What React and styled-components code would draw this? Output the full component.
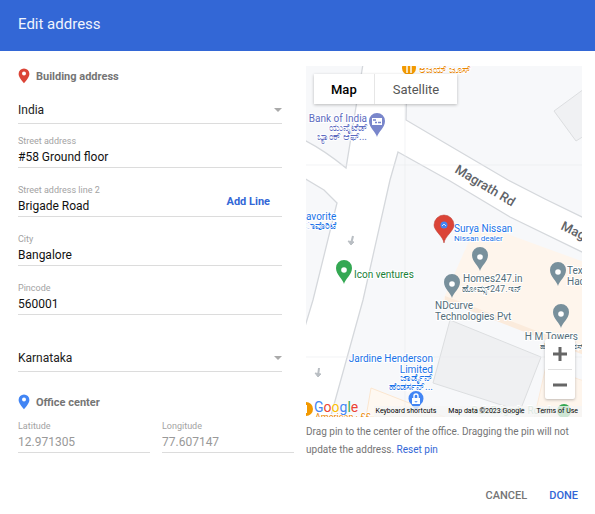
import React, { useState } from "react";
import styled, { createGlobalStyle } from "styled-components";

const PIN_PATH =
  "M0 0C-1-5-8-9-8-16A8 8 0 0 1 8-16C8-9 1-5 0 0Z";

const ADDRESS_FIELDS = [
  { name: "street", label: "Street address" },
  { name: "street2", label: "Street address line 2", action: "Add Line" },
  { name: "city", label: "City" },
  { name: "pincode", label: "Pincode" },
];

const PINS = [
  { x: 38, y: 218, color: "#34a853" },
  { x: 174, y: 205, color: "#78909c" },
  { x: 146, y: 232, color: "#78909c" },
  { x: 252, y: 220, color: "#78909c" },
  { x: 255, y: 262, color: "#78909c" },
];

const LABELS = [
  { x: 113, y: 7, text: "ಅಜಯ್ ಜೂಸ್", color: "#ea8600" },
  { x: 61, y: 56, text: "Bank of India", color: "#5c6bc0", anchor: "end" },
  { x: 61, y: 65, text: "ಯುನೈಟೆಡ್", color: "#5c6bc0", anchor: "end" },
  { x: 61, y: 74, text: "ಬ್ಯಾಂಕ್ ಆಫ್...", color: "#5c6bc0", anchor: "end" },
  { x: 0, y: 154, text: "avorite", color: "#1a73e8" },
  { x: -1, y: 163, text: "ಾವೊರಿಟೆ", color: "#1a73e8", size: 9 },
  { x: 48, y: 212, text: "Icon ventures", color: "#188038" },
  { x: 148, y: 166, text: "Surya Nissan", color: "#1a73e8" },
  { x: 148, y: 175, text: "Nissan dealer", color: "#1a73e8", size: 8 },
  { x: 157, y: 216, text: "Homes247.in", color: "#546e7a" },
  { x: 156, y: 226, text: "ಹೋಮ್ಸ್247.ಇನ್", color: "#546e7a", size: 9 },
  { x: 129, y: 243, text: "NDcurve", color: "#546e7a" },
  { x: 129, y: 254, text: "Technologies Pvt", color: "#546e7a" },
  { x: 261, y: 208, text: "Texas", color: "#546e7a" },
  { x: 261, y: 219, text: "Hacks", color: "#546e7a" },
  { x: 272, y: 274, text: "H M Towers", color: "#546e7a", anchor: "end" },
  { x: 234, y: 283, text: "ಹೆಚ್ ಎಂ ಟವರ್ಸ್", color: "#546e7a", size: 8 },
  { x: 127, y: 296, text: "Jardine Henderson", color: "#1a73e8", anchor: "end" },
  { x: 127, y: 307, text: "Limited", color: "#1a73e8", anchor: "end" },
  { x: 127, y: 315, text: "ಜಾರ್ಡೈನ್", color: "#1a73e8", anchor: "end" },
  { x: 127, y: 324, text: "ಹೆಂಡರ್ಸನ್...", color: "#1a73e8", anchor: "end" },
  { x: 9, y: 354, text: "American · ££", color: "#ea8600", size: 9 },
  { x: 165, y: 348, text: "Oak Brigade Road", color: "#81b894" },
];

const PinIcon = ({ color }) => (
  <svg width="12" height="16" viewBox="0 0 12 16" aria-hidden="true">
    <path
      d="M6 0.5A5.4 5.4 0 0 0 .6 5.9C.6 9.6 6 15.2 6 15.2S11.4 9.6 11.4 5.9A5.4 5.4 0 0 0 6 .5Z"
      fill={color}
    />
    <circle cx="6" cy="5.6" r="2" fill="#fff" />
  </svg>
);

const SelectField = ({ label, value, options, onChange }) => (
  <SelectWrapStyling>
    <SelectStyling aria-label={label} value={value} onChange={onChange}>
      {options.map((option) => (
        <option key={option}>{option}</option>
      ))}
    </SelectStyling>
    <svg width="8" height="4" viewBox="0 0 8 4" aria-hidden="true">
      <path d="M0 0H8L4 4Z" fill="#aaa" />
    </svg>
  </SelectWrapStyling>
);

const TextField = ({ id, label, action, ...rest }) => (
  <FieldStyling>
    <LabelStyling htmlFor={id}>{label}</LabelStyling>
    <InputRowStyling>
      <InputStyling id={id} {...rest} />
      {action && <AddLineStyling type="button">{action}</AddLineStyling>}
    </InputRowStyling>
  </FieldStyling>
);

const MapDrawing = () => (
  <MapSvgStyling viewBox="0 0 276 351" preserveAspectRatio="xMidYMid slice">
    <rect width="276" height="351" fill="#fff" />
    <g fill="#f7f8fa" stroke="#d5d8dc" strokeWidth="1.3">
      <path d="M57-2L40 102Q18 84-2 74V-2Z" />
      <path d="M-2 112L18 124L31 137L7 234L-2 264Z" />
      <path d="M101-2L100 54L139 77L202 114L239 133L278 152V-2Z" />
      <path d="M92 86L144 115L204 151L278 187V353H24L57 234L84 114Z" />
    </g>
    <path d="M248 45L278 23V70L270 75Z" fill="#f0f1f3" stroke="#dcdee0" />
    <path d="M171 157L278 196V288L137 234L151 202Z" fill="#fef5ec" />
    <path d="M139 230L278 283V289L139 235Z" fill="#fbebdc" />
    <path d="M65 322L139 351H60Z" fill="#fef8f1" stroke="#fbe6cf" />
    <path d="M240 300C252 304 262 310 278 315V353H228Z" fill="#fef5ec" stroke="#fbebdc" />
    <path d="M144 254L235 291L214 345L127 317Z" fill="#eff0f2" stroke="#dcdee0" />
    <path d="M99 0V351M0 99H276M0 291H276" stroke="#e9ebee" strokeWidth="0.6" />
    <g fill="none" stroke="#b9bec3" strokeWidth="1">
      <path d="M47 170L45 178" strokeWidth="2" />
      <path d="M42 175L45 179L48 176Z" fill="#b9bec3" />
      <path d="M13 302L12 310" strokeWidth="2" />
      <path d="M9 307L12 311L15 308Z" fill="#b9bec3" />
    </g>
    <RoadNameStyling x="0" y="0" transform="translate(148 106) rotate(31)">
      Magrath Rd
    </RoadNameStyling>
    <RoadNameStyling x="0" y="0" transform="translate(254 163) rotate(26)">
      Magrath Rd
    </RoadNameStyling>
    {PINS.map(({ x, y, color }) => (
      <g key={`${x}-${y}`} transform={`translate(${x} ${y})`}>
        <path d={PIN_PATH} fill={color} />
        <circle cy="-14" r="2.8" fill="#fff" />
      </g>
    ))}
    <g transform="translate(71 71)">
      <path d={PIN_PATH} fill="#7986cb" />
      <path d="M-5-19H5V-12H-5Z" fill="#fff" />
      <path d="M-4-17H-1M-2-14.500H0M1-14.500H4" stroke="#7986cb" strokeWidth="1.4" />
    </g>
    <circle cx="103" cy="2" r="7" fill="#f29900" />
    <path d="M99-1H105M101-1V7M105 0V7" stroke="#fff" strokeWidth="1.4" />
    <circle cx="0" cy="343" r="7" fill="#f29900" />
    <path d="M0 339V347" stroke="#fff" strokeWidth="2" />
    <circle cx="258" cy="345" r="7" fill="#34a853" />
    <g transform="translate(110 333)">
      <path d="M0 12L-5 5A7.5 7.5 0 1 1 5 5Z" fill="#4285f4" />
      <path d="M-4-1H4V5H-4Z" fill="#fff" />
      <path d="M-2-1V-3A2 2 0 0 1 2-3V-1" fill="none" stroke="#fff" strokeWidth="1.4" />
      <path d="M-1 2A1 1 0 0 0 1 2" stroke="#4285f4" fill="none" />
    </g>
    {LABELS.map(({ x, y, text, color, anchor, size = 10 }) => (
      <PlaceNameStyling key={text} x={x} y={y} fill={color} textAnchor={anchor} $size={size}>
        {text}
      </PlaceNameStyling>
    ))}
    <path
      d="M138 177C137 170 128 165 128 159A10 10 0 0 1 148 159C148 165 139 170 138 177Z"
      fill="#db4437"
      stroke="#b93b30"
      strokeWidth="0.5"
    />
    <circle cx="138" cy="159" r="3.500" fill="#4285f4" />
    <path d="M136 160L138 158L140 160" stroke="#cfe0ff" fill="none" />
  </MapSvgStyling>
);

const GoogleLogo = () => (
  <LogoStyling href="#google" aria-label="Google">
    {["#4285f4", "#ea4335", "#fbbc04", "#4285f4", "#34a853", "#ea4335"].map(
      (color, index) => (
        <LogoLetterStyling key={index} $color={color}>
          {"Google"[index]}
        </LogoLetterStyling>
      )
    )}
  </LogoStyling>
);

const OfficeMap = () => {
  const [view, setView] = useState("Map");
  return (
    <MapStyling>
      <MapDrawing />
      <ViewSwitchStyling>
        {["Map", "Satellite"].map((name) => (
          <ViewButtonStyling
            key={name}
            type="button"
            $active={view === name}
            onClick={() => setView(name)}
          >
            {name}
          </ViewButtonStyling>
        ))}
      </ViewSwitchStyling>
      <ZoomStyling>
        <ZoomButtonStyling type="button" aria-label="Zoom in">
          <svg width="14" height="14" viewBox="0 0 14 14">
            <path d="M7 0V14M0 7H14" stroke="#666" strokeWidth="3" />
          </svg>
        </ZoomButtonStyling>
        <ZoomButtonStyling type="button" aria-label="Zoom out">
          <svg width="14" height="14" viewBox="0 0 14 14">
            <path d="M0 7H14" stroke="#666" strokeWidth="3" />
          </svg>
        </ZoomButtonStyling>
      </ZoomStyling>
      <MapFooterStyling>
        <GoogleLogo />
        <CreditsStyling>
          <ShortcutsStyling type="button">Keyboard shortcuts</ShortcutsStyling>
          <span>Map data ©2023 Google</span>
          <TermsStyling href="#terms">Terms of Use</TermsStyling>
        </CreditsStyling>
      </MapFooterStyling>
    </MapStyling>
  );
};

const App = () => {
  const [address, setAddress] = useState({
    country: "India",
    street: "#58 Ground floor",
    street2: "Brigade Road",
    city: "Bangalore",
    pincode: "560001",
    state: "Karnataka",
  });

  const update = (name) => (event) =>
    setAddress({ ...address, [name]: event.target.value });

  return (
    <>
      <GlobalStyle />
      <HeaderStyling>
        <TitleStyling>Edit address</TitleStyling>
      </HeaderStyling>
      <BodyStyling>
        <form>
          <SectionTitleStyling>
            <PinIcon color="#db4437" />
            Building address
          </SectionTitleStyling>
          <AddressStyling>
            <SelectField
              label="Country"
              value={address.country}
              options={["India"]}
              onChange={update("country")}
            />
            <FieldListStyling>
              {ADDRESS_FIELDS.map(({ name, label, action }) => (
                <TextField
                  key={name}
                  id={name}
                  label={label}
                  action={action}
                  value={address[name]}
                  onChange={update(name)}
                />
              ))}
            </FieldListStyling>
            <SelectField
              label="State"
              value={address.state}
              options={["Karnataka"]}
              onChange={update("state")}
            />
          </AddressStyling>
          <SectionTitleStyling>
            <PinIcon color="#4285f4" />
            Office center
          </SectionTitleStyling>
          <CoordinatesStyling>
            <TextField id="lat" label="Latitude" value="12.971305" disabled />
            <TextField id="lng" label="Longitude" value="77.607147" disabled />
          </CoordinatesStyling>
        </form>
        <div>
          <OfficeMap />
          <HintStyling>
            Drag pin to the center of the office. Dragging the pin will not
            update the address. <ResetStyling href="#reset">Reset pin</ResetStyling>
          </HintStyling>
        </div>
      </BodyStyling>
      <ActionsStyling>
        <ActionStyling type="button">CANCEL</ActionStyling>
        <ActionStyling type="button" $primary>
          DONE
        </ActionStyling>
      </ActionsStyling>
    </>
  );
};

export default App;

// Styles //
const GlobalStyle = createGlobalStyle`
  * {
    box-sizing: border-box;
  }
  body {
    margin: 0;
    background: #fff;
    font-family: Roboto, "Liberation Sans", sans-serif;
  }
  button, input, select {
    font-family: inherit;
    border: 0;
    padding: 0;
    background: none;
  }
  a {
    text-decoration: none;
  }
`;
const HeaderStyling = styled.header`
  padding: 14px 18px 17px;
  background: #3367d6;
`;
const TitleStyling = styled.h1`
  margin: 0;
  color: #f0f4fd;
  font-size: 15px;
  line-height: 20px;
  font-weight: 400;
`;
const BodyStyling = styled.main`
  display: grid;
  grid-template-columns: 1fr 1fr;
  gap: 12px;
  padding: 15px 13px 0 18px;
`;
const SectionTitleStyling = styled.h2`
  display: flex;
  align-items: center;
  gap: 6px;
  height: 20px;
  margin: 0;
  color: #757575;
  font-size: 11px;
  font-weight: 700;
`;
const AddressStyling = styled.div`
  padding: 10px 12px 20px 0;
`;
const SelectWrapStyling = styled.div`
  display: grid;
  grid-template-columns: 1fr 8px;
  align-items: center;
  height: 28px;
  border-bottom: 1px solid #dcdcdc;
`;
const SelectStyling = styled.select`
  appearance: none;
  width: calc(100% + 8px);
  color: #212121;
  font-size: 12px;
  line-height: 20px;
  outline: none;
`;
const FieldListStyling = styled.div`
  display: grid;
  gap: 5px;
  padding-bottom: 29px;
`;
const FieldStyling = styled.div`
  padding-top: 12px;
  min-width: 0;
`;
const LabelStyling = styled.label`
  display: block;
  color: #a3a3a3;
  font-size: 9px;
  line-height: 10px;
`;
const InputRowStyling = styled.div`
  display: flex;
  height: 22px;
  border-bottom: 1px solid #dcdcdc;
`;
const InputStyling = styled.input`
  flex: 1;
  min-width: 0;
  color: #111;
  font-size: 12px;
  outline: none;

  &:disabled {
    color: #999;
  }
`;
const AddLineStyling = styled.button`
  align-self: flex-start;
  margin-right: 12px;
  color: #3367d6;
  font-size: 11px;
  line-height: 14px;
  font-weight: 700;
`;
const CoordinatesStyling = styled.div`
  display: grid;
  grid-template-columns: 1fr 1fr;
  gap: 12px;
  margin-top: -3px;
`;
const MapStyling = styled.section`
  position: relative;
  height: 351px;
  overflow: hidden;
`;
const MapSvgStyling = styled.svg`
  display: block;
  width: 100%;
  height: 100%;
`;
const PlaceNameStyling = styled.text`
  font-size: ${({ $size }) => $size}px;
  stroke: #fff;
  stroke-width: 2px;
  paint-order: stroke;
`;
const RoadNameStyling = styled.text`
  fill: #5f6368;
  font-size: 13px;
  font-weight: 500;
`;
const ViewSwitchStyling = styled.div`
  position: absolute;
  top: 8px;
  left: 8px;
  display: flex;
  background: #fff;
  box-shadow: 0 1px 3px rgba(0, 0, 0, 0.25);
`;
const ViewButtonStyling = styled.button`
  height: 30px;
  padding: 0 17px;
  color: ${({ $active }) => ($active ? "#000" : "#565656")};
  font-size: 13px;
  font-weight: ${({ $active }) => ($active ? 500 : 400)};

  & + & {
    padding: 0 18px;
    border-left: 1px solid #e6e6e6;
  }
`;
const ZoomStyling = styled.div`
  position: absolute;
  right: 7px;
  bottom: 18px;
  width: 30px;
  background: #fff;
  border-radius: 2px;
  box-shadow: 0 1px 3px rgba(0, 0, 0, 0.25);
`;
const ZoomButtonStyling = styled.button`
  display: flex;
  align-items: center;
  justify-content: center;
  width: 24px;
  height: 30px;
  margin: 0 3px;

  & + & {
    border-top: 1px solid #e0e0e0;
  }
`;
const MapFooterStyling = styled.div`
  position: absolute;
  right: 0;
  bottom: 0;
  left: 8px;
  display: flex;
  align-items: flex-end;
  justify-content: space-between;
`;
const LogoStyling = styled.a`
  font-size: 14px;
  line-height: 20px;
  text-shadow: 0 0 2px #fff, 0 0 2px #fff;
`;
const LogoLetterStyling = styled.span`
  color: ${({ $color }) => $color};
`;
const CreditsStyling = styled.div`
  display: flex;
  gap: 12px;
  padding: 0 4px 0 2px;
  background: rgba(245, 245, 245, 0.8);
  color: #000;
  font-size: 7px;
  line-height: 11px;
  white-space: nowrap;
`;
const ShortcutsStyling = styled.button`
  color: inherit;
  font-size: inherit;
  line-height: inherit;
`;
const TermsStyling = styled.a`
  color: inherit;
`;
const HintStyling = styled.p`
  margin: 6px 0 0;
  color: #757575;
  font-size: 10px;
  line-height: 18px;
`;
const ResetStyling = styled.a`
  color: #3367d6;
`;
const ActionsStyling = styled.footer`
  display: flex;
  justify-content: flex-end;
  gap: 22px;
  padding: 27px 17px 8px;
`;
const ActionStyling = styled.button`
  color: ${({ $primary }) => ($primary ? "#3367d6" : "#757575")};
  font-size: 11px;
  line-height: 20px;
  font-weight: 500;
`;
